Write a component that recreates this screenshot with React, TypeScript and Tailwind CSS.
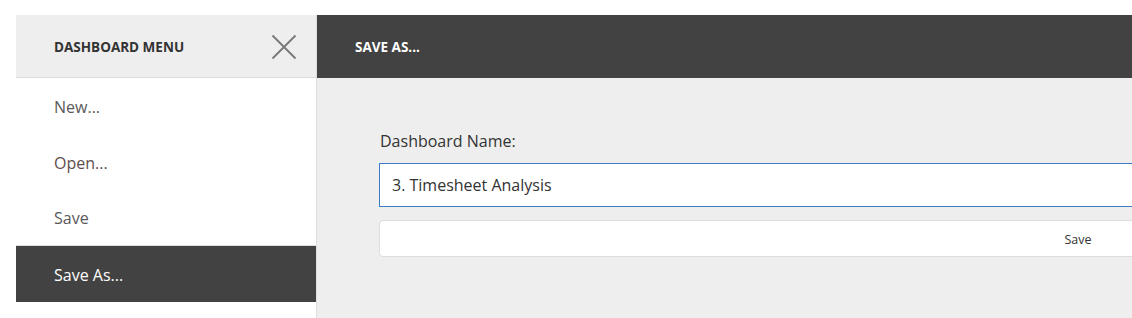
import React from 'react';

const menuItems = [
  { name: 'New...', color: 'text-[#595959]' },
  { name: 'Open...', color: 'text-[#604c4c]' },
  { name: 'Save', color: 'text-[#595959]' },
  { name: 'Save As...', color: 'text-white', active: true },
];

export default function App() {
  return (
    <div
      className="w-[1132px] h-[318px] bg-white pt-[15px] pl-4 flex overflow-hidden"
      style={{ fontFamily: '"Open Sans", "Noto Sans", sans-serif' }}
    >
      <aside className="w-[301px] shrink-0 border-r border-[#dddddd] bg-white flex flex-col">
        <div className="h-[63px] shrink-0 bg-[#eeeeee] border-b border-[#dddddd] flex items-center justify-between pl-[38px] pr-[19px]">
          <span className="text-[13.5px] font-bold text-[#333333] pt-[2px]">DASHBOARD MENU</span>
          <svg width="26" height="26" viewBox="0 0 26 26" className="mt-[1px]">
            <path d="M1.5 1.5 L24.5 24.5 M24.5 1.5 L1.5 24.5" stroke="#777777" strokeWidth="1.8" fill="none" />
          </svg>
        </div>
        <nav className="flex flex-col">
          {menuItems.map((item, i) => (
            <div
              key={item.name}
              className={
                'h-14 flex items-center pl-[38px] pt-[1px] text-[16px] ' +
                item.color +
                (item.active ? ' bg-[#424242]' : '') +
                (i === 2 ? ' border-b border-[#dddddd]' : '')
              }
            >
              {item.name}
            </div>
          ))}
        </nav>
      </aside>

      <main className="flex-1 min-w-0 bg-[#eeeeee] flex flex-col">
        <div className="h-[63px] shrink-0 bg-[#424242] flex items-center pl-[38px]">
          <span className="text-[13.5px] font-bold text-white pt-[2px]">SAVE AS...</span>
        </div>
        <div className="pl-[62px] pt-[52px]">
          <div className="w-[1398px]">
            <div className="text-[16px] leading-[22px] text-[#333333] pl-[1px]">Dashboard Name:</div>
            <div className="mt-[11px] h-[44px] bg-white border border-[#3d7bc4] flex items-center pl-[12px] text-[16px] text-[#333333]">
              3. Timesheet Analysis
            </div>
            <button className="mt-[13px] w-full h-[37px] pt-[3px] bg-white border border-[#dddddd] rounded-[4px] text-[12.5px] text-[#333333]">
              Save
            </button>
          </div>
        </div>
      </main>
    </div>
  );
}
